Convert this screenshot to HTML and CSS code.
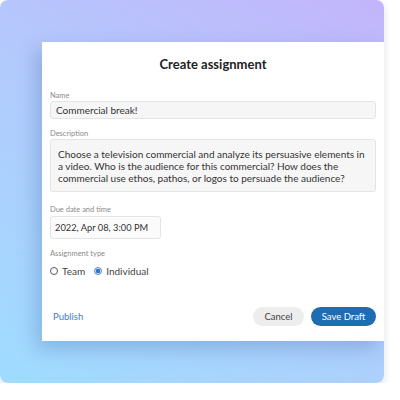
FILE: index.html
```html
<!DOCTYPE html>
<html lang="en">
  <head>
    <meta charset="UTF-8" />
    <title>Create assignment</title>
    <link rel="stylesheet" href="styles.css">
  </head>
  <body>
    <div class="backdrop">
      <div class="dialog">
        <h1>Create assignment</h1>

        <div class="field">
          <label>Name</label>
          <div class="input">Commercial break!</div>
        </div>

        <div class="field description">
          <label>Description</label>
          <div class="input textarea">
            Choose a television commercial and analyze its persuasive elements in a
            video. Who is the audience for this commercial? How does the
            commercial use ethos, pathos, or logos to persuade the audience?
          </div>
        </div>

        <div class="field">
          <label>Due date and time</label>
          <div class="input date">2022, Apr 08, 3:00 PM</div>
        </div>

        <div class="field">
          <label>Assignment type</label>
          <div class="radios">
            <span class="radio"><span class="dot"></span>Team</span>
            <span class="radio checked"><span class="dot"></span>Individual</span>
          </div>
        </div>

        <div class="actions">
          <a class="publish">Publish</a>
          <div class="buttons">
            <button class="cancel">Cancel</button>
            <button class="save">Save Draft</button>
          </div>
        </div>
      </div>
    </div>
  </body>
</html>
```

FILE: styles.css
```css
* {
  box-sizing: border-box;
}
body {
  margin: 0;
  font-family: Lato, "Open Sans", sans-serif;
  background-color: #ffffff;
}
.backdrop {
  width: 384px;
  height: 383px;
  border-radius: 8px;
  overflow: hidden;
  padding: 42px 0 0 42px;
  background: linear-gradient(30deg, #9fdcff 0%, #b1ccfd 50%, #c3b5fb 100%);
  box-shadow: 0 4px 10px rgba(0, 0, 0, 0.12);
}
.dialog {
  width: 342px;
  height: 299px;
  background-color: #ffffff;
  padding: 0 8px;
  box-shadow: -6px 8px 18px rgba(60, 100, 160, 0.3);
  display: flex;
  flex-direction: column;
}
h1 {
  margin: 14px 0 19px;
  text-align: center;
  font-size: 13px;
  font-weight: 700;
  color: #222;
}
.field {
  margin-bottom: 10px;
}
.description {
  margin-bottom: 13px;
}
label {
  display: block;
  font-size: 7.5px;
  color: #8a8a8a;
  margin-bottom: 1px;
}
.input {
  background-color: #f6f6f6;
  border: 1px solid #e4e4e4;
  border-radius: 3px;
  padding: 2px 5px;
  font-size: 10px;
  color: #333;
  height: 18px;
  white-space: nowrap;
}
.textarea {
  height: 53px;
  padding: 8px 7px;
  line-height: 12px;
  white-space: normal;
}
.date {
  display: inline-block;
  width: 111px;
  height: 23px;
  padding: 5px 4px;
  margin-top: 1px;
  font-size: 9.3px;
  background-color: #fbfbfb;
}
.radios {
  display: flex;
  gap: 9px;
  font-size: 10px;
  color: #444;
  margin-top: 7px;
}
.radio {
  display: flex;
  align-items: center;
  gap: 4px;
}
.dot {
  width: 8px;
  height: 8px;
  border: 1px solid #555;
  border-radius: 50%;
}
.checked .dot {
  border-color: #4a8ad0;
  background: radial-gradient(circle, #2f75c2 0 2px, #dce9f7 2.5px);
}
.actions {
  margin-top: auto;
  margin-bottom: 15px;
  display: flex;
  justify-content: space-between;
  align-items: center;
}
.publish {
  font-size: 9.5px;
  color: #3a7dc6;
  padding-left: 3px;
}
.buttons {
  display: flex;
  gap: 7px;
}
button {
  font-family: Lato, "Open Sans", sans-serif;
  font-size: 9.5px;
  border: none;
  border-radius: 10px;
  height: 19px;
  padding: 0 10px;
}
.cancel {
  background-color: #ededed;
  color: #444;
  width: 51px;
}
.save {
  background-color: #1e6cb4;
  color: #ffffff;
  width: 65px;
}
```
